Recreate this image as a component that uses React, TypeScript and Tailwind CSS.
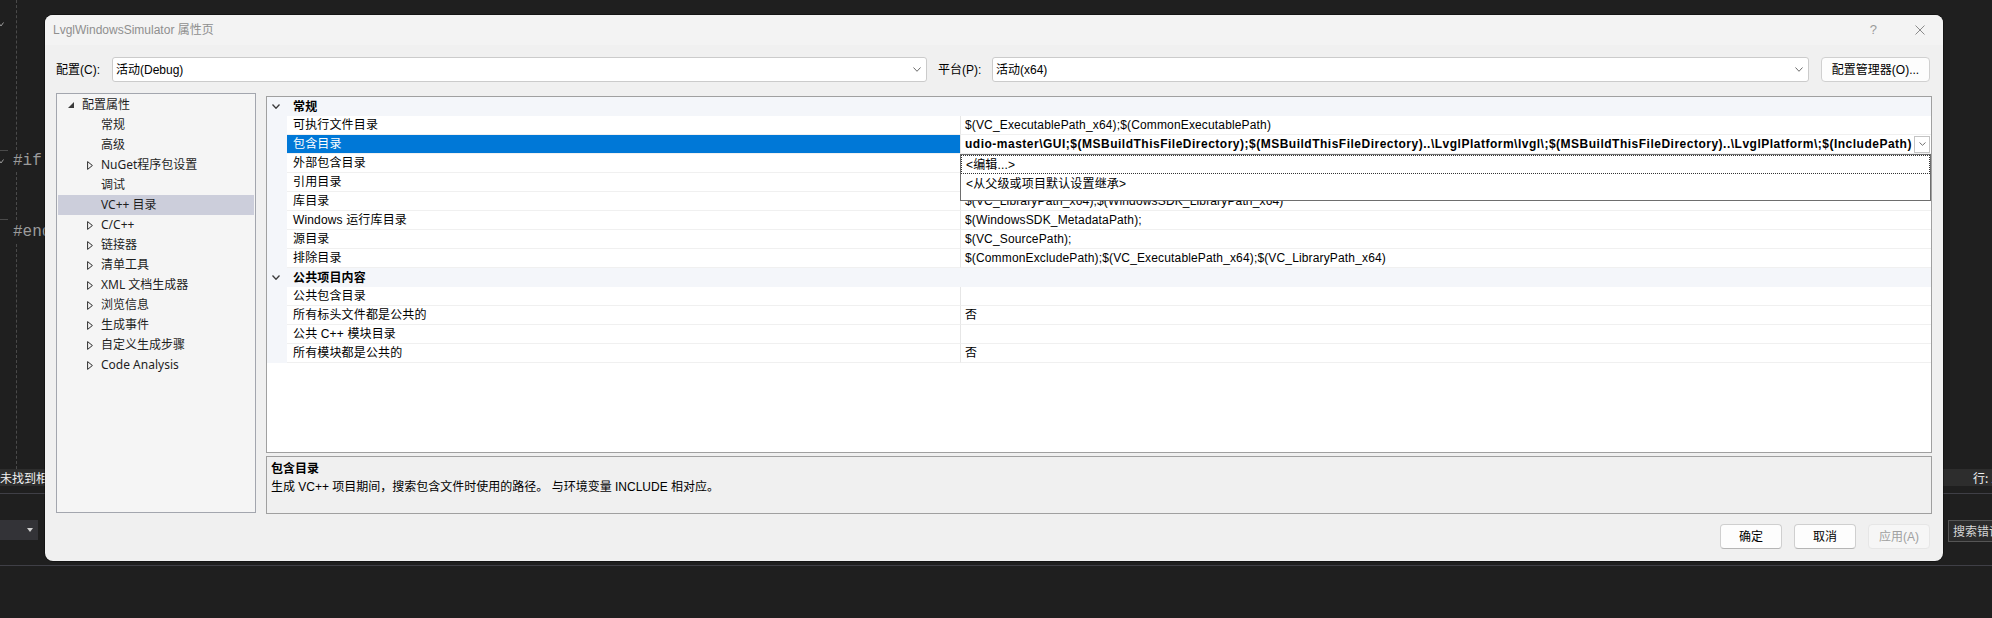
import React from 'react';

type Row =
  | { kind: 'cat'; label: string }
  | { kind: 'item'; name: string; value: string; selected?: boolean };

const rows: Row[] = [
  { kind: 'cat', label: '常规' },
  { kind: 'item', name: '可执行文件目录', value: '$(VC_ExecutablePath_x64);$(CommonExecutablePath)' },
  {
    kind: 'item',
    name: '包含目录',
    value:
      'udio-master\\GUI;$(MSBuildThisFileDirectory);$(MSBuildThisFileDirectory)..\\LvglPlatform\\lvgl\\;$(MSBuildThisFileDirectory)..\\LvglPlatform\\;$(IncludePath)',
    selected: true,
  },
  { kind: 'item', name: '外部包含目录', value: '' },
  { kind: 'item', name: '引用目录', value: '' },
  { kind: 'item', name: '库目录', value: '$(VC_LibraryPath_x64);$(WindowsSDK_LibraryPath_x64)' },
  { kind: 'item', name: 'Windows 运行库目录', value: '$(WindowsSDK_MetadataPath);' },
  { kind: 'item', name: '源目录', value: '$(VC_SourcePath);' },
  { kind: 'item', name: '排除目录', value: '$(CommonExcludePath);$(VC_ExecutablePath_x64);$(VC_LibraryPath_x64)' },
  { kind: 'cat', label: '公共项目内容' },
  { kind: 'item', name: '公共包含目录', value: '' },
  { kind: 'item', name: '所有标头文件都是公共的', value: '否' },
  { kind: 'item', name: '公共 C++ 模块目录', value: '' },
  { kind: 'item', name: '所有模块都是公共的', value: '否' },
];

type TreeItem = { label: string; root?: boolean; exp?: boolean; selected?: boolean };
const tree: TreeItem[] = [
  { label: '配置属性', root: true },
  { label: '常规' },
  { label: '高级' },
  { label: 'NuGet程序包设置', exp: true },
  { label: '调试' },
  { label: 'VC++ 目录', selected: true },
  { label: 'C/C++', exp: true },
  { label: '链接器', exp: true },
  { label: '清单工具', exp: true },
  { label: 'XML 文档生成器', exp: true },
  { label: '浏览信息', exp: true },
  { label: '生成事件', exp: true },
  { label: '自定义生成步骤', exp: true },
  { label: 'Code Analysis', exp: true },
];

function Chevron({ color = '#6b6b6b', sw = 1, w = 8, h = 5 }: { color?: string; sw?: number; w?: number; h?: number }) {
  return (
    <svg width={w} height={h} viewBox={`0 0 ${w} ${h}`} className="block">
      <polyline points={`0.5,0.5 ${w / 2},${h - 0.7} ${w - 0.5},0.5`} fill="none" stroke={color} strokeWidth={sw} />
    </svg>
  );
}

function Combo({ text, width }: { text: string; width: string }) {
  return (
    <div className={`${width} flex h-[25px] items-center justify-between rounded-[3px] border border-[#cbcbcb] bg-white pl-[3px] pr-[5px]`}>
      <span className="leading-[16px]">{text}</span>
      <Chevron />
    </div>
  );
}

function Grid() {
  return (
    <div className="h-[357px] mt-[3px] border border-[#a0a0a0] bg-white font-['Liberation_Sans','Noto_Sans_CJK_SC',sans-serif] text-[12px] tracking-[0.15px] text-black">
      {rows.map((r, i) => {
        if (r.kind === 'cat') {
          return (
            <div key={i} className="flex h-[19px] items-center bg-[#f4f6fa]">
              <div className="flex w-[20px] justify-start pl-[5px]">
                <Chevron color="#3c3c3c" sw={1.3} w={8} h={5} />
              </div>
              <span className="pl-[6px] font-bold leading-[16px]">{r.label}</span>
            </div>
          );
        }
        return (
          <div key={i} className="flex h-[19px]">
            <div className="w-[20px] shrink-0 bg-[#f4f6fa]" />
            <div
              className={
                r.selected
                  ? 'flex w-[674px] shrink-0 items-center border-b border-r border-b-[#f0f0f0] border-r-[#e6e6e6] bg-[#0078d7] pl-[6px] text-white'
                  : 'flex w-[674px] shrink-0 items-center border-b border-r border-b-[#f0f0f0] border-r-[#e6e6e6] pl-[6px]'
              }
            >
              <span className="leading-[16px]">{r.name}</span>
            </div>
            <div className="relative flex min-w-0 flex-1 items-center border-b border-[#f0f0f0] pl-[4px]">
              {r.selected ? (
                <>
                  <div className="min-w-0 flex-1 overflow-hidden whitespace-nowrap font-bold leading-[16px] tracking-[0.5px]">
                    {r.value}
                  </div>
                  <div className="mr-[1px] flex h-[17px] w-[16px] shrink-0 items-center justify-center border border-[#c4c4c4] bg-white">
                    <Chevron color="#707070" w={7} h={4} />
                  </div>
                  <div className="absolute left-[-1px] right-0 top-[19px] z-10 h-[47px] border border-[#6e6e6e] bg-white">
                    <div className="flex h-[19px] items-center border border-dotted border-[#333] pl-[4px]">
                      <span className="leading-[16px]">&lt;编辑...&gt;</span>
                    </div>
                    <div className="flex h-[19px] items-center pl-[5px]">
                      <span className="leading-[16px]">&lt;从父级或项目默认设置继承&gt;</span>
                    </div>
                  </div>
                </>
              ) : (
                <span className="whitespace-nowrap leading-[16px]">{r.value}</span>
              )}
            </div>
          </div>
        );
      })}
    </div>
  );
}

function Tree() {
  return (
    <div className="h-[420px] w-[200px] shrink-0 border border-[#a3a6ae] bg-[#f5f5f5] pt-[1px] font-['Noto_Sans','Noto_Sans_CJK_SC',sans-serif] text-[12px] text-[#1e1e1e]">
      {tree.map((t, i) => (
        <div
          key={i}
          className={
            t.selected
              ? 'mx-[1px] flex h-[20px] items-center bg-[#cccedb]'
              : 'mx-[1px] flex h-[20px] items-center'
          }
        >
          {t.root ? (
            <>
              <div className="w-[24px] shrink-0 pl-[10px]">
                <svg width="6" height="6" viewBox="0 0 6 6" className="block">
                  <polygon points="6,0 6,6 0,6" fill="#3a3a3a" />
                </svg>
              </div>
              <span className="leading-[16px]">{t.label}</span>
            </>
          ) : (
            <>
              <div className="w-[43px] shrink-0 pl-[29px]">
                {t.exp ? (
                  <svg width="6" height="9" viewBox="0 0 6 9" className="block">
                    <polygon points="0.6,0.6 5.4,4.5 0.6,8.4" fill="none" stroke="#2e2e2e" strokeWidth="1" />
                  </svg>
                ) : null}
              </div>
              <span className="leading-[16px]">{t.label}</span>
            </>
          )}
        </div>
      ))}
    </div>
  );
}

function Dialog() {
  return (
    <div className="absolute left-[45px] top-[15px] h-[546px] w-[1898px] overflow-hidden rounded-[8px] bg-[#f0f0f0] font-['Liberation_Sans','Noto_Sans_CJK_SC',sans-serif] text-[12px] text-black shadow-[0_0_0_1px_rgba(0,0,0,0.35)]">
      {/* title bar */}
      <div className="flex h-[30px] items-center bg-[#f3f3f3]">
        <span className="pl-[8px] leading-[16px] text-[#8f8f8f]">LvglWindowsSimulator 属性页</span>
        <div className="ml-auto flex items-center pr-[18px]">
          <span className="font-['Liberation_Sans',sans-serif] text-[13px] leading-[16px] text-[#9a9a9a]">?</span>
          <svg width="10" height="10" viewBox="0 0 10 10" className="ml-[38px] block">
            <path d="M0.5 0.5 L9.5 9.5 M9.5 0.5 L0.5 9.5" stroke="#8a8a8a" strokeWidth="1" fill="none" />
          </svg>
        </div>
      </div>

      {/* config row */}
      <div className="mt-[12px] flex h-[25px] items-center pl-[11px] pr-[13px]">
        <span className="w-[56px] shrink-0 leading-[16px]">配置(C):</span>
        <Combo text="活动(Debug)" width="w-[815px]" />
        <span className="ml-[11px] w-[54px] shrink-0 leading-[16px]">平台(P):</span>
        <Combo text="活动(x64)" width="w-[817px]" />
        <div className="ml-[12px] flex h-[25px] w-[109px] items-center justify-center rounded-[4px] border border-[#d0d0d0] bg-[#fdfdfd]">
          <span className="leading-[16px]">配置管理器(O)...</span>
        </div>
      </div>

      {/* main */}
      <div className="mt-[11px] flex h-[421px] items-start gap-[10px] px-[11px]">
        <Tree />
        <div className="flex w-[1666px] flex-col">
          <Grid />
          <div className="mt-[3px] h-[58px] border border-[#a0a0a0] bg-[#f0f0f0] pl-[4px] pt-[3px]">
            <div className="h-[18px] font-bold leading-[18px]">包含目录</div>
            <div className="h-[18px] leading-[18px]">生成 VC++ 项目期间，搜索包含文件时使用的路径。 与环境变量 INCLUDE 相对应。</div>
          </div>
        </div>
      </div>

      {/* footer */}
      <div className="mt-[10px] flex justify-end gap-[12px] pr-[13px]">
        <div className="flex h-[25px] w-[62px] items-center justify-center rounded-[4px] border border-[#cfcfcf] border-b-[#b5b5b5] bg-[#fdfdfd]">
          <span className="leading-[16px]">确定</span>
        </div>
        <div className="flex h-[25px] w-[62px] items-center justify-center rounded-[4px] border border-[#cfcfcf] border-b-[#b5b5b5] bg-[#fdfdfd]">
          <span className="leading-[16px]">取消</span>
        </div>
        <div className="flex h-[25px] w-[62px] items-center justify-center rounded-[4px] border border-[#e6e6e6] bg-[#f6f6f6]">
          <span className="leading-[16px] text-[#a0a0a0]">应用(A)</span>
        </div>
      </div>
    </div>
  );
}

export default function App() {
  return (
    <div className="relative h-[618px] w-[1992px] overflow-hidden bg-[#1f1f1f] font-['Noto_Sans_CJK_SC',sans-serif]">
      {/* editor area */}
      <div className="relative h-[469px]">
        <div className="pl-[13px] pt-[150px] font-['Liberation_Mono',monospace] text-[16px] leading-[23.5px] text-[#9b9b9b]">
          <div>#if</div>
          <div>&nbsp;</div>
          <div>&nbsp;</div>
          <div>#endif</div>
        </div>
        {/* indent guide segments */}
        <div className="absolute left-[16px] top-[0px] h-[150px] border-l border-dashed border-[#4a4a4a]" />
        <div className="absolute left-[16px] top-[172px] h-[48px] border-l border-dashed border-[#4a4a4a]" />
        <div className="absolute left-[16px] top-[244px] h-[225px] border-l border-dashed border-[#4a4a4a]" />
        {/* gutter fold markers */}
        <svg width="6" height="5" viewBox="0 0 6 5" className="absolute left-[-2px] top-[22px]">
          <polyline points="0.5,0.5 3,4 5.5,0.5" fill="none" stroke="#9a9a9a" strokeWidth="1" />
        </svg>
        <svg width="6" height="5" viewBox="0 0 6 5" className="absolute left-[-2px] top-[159px]">
          <polyline points="0.5,0.5 3,4 5.5,0.5" fill="none" stroke="#9a9a9a" strokeWidth="1" />
        </svg>
        <div className="absolute left-[0px] top-[150px] w-[8px] border-t border-[#4a4a4a]" />
        <div className="absolute left-[0px] top-[219px] w-[8px] border-t border-[#4a4a4a]" />
      </div>

      {/* status strip */}
      <div className="flex h-[17px] items-center overflow-hidden whitespace-nowrap bg-[#2d2d2d] text-[12px] text-[#f1f1f1]">
        <div className="w-[1973px] shrink-0 leading-[16px]">未找到相关问题</div>
        <div className="shrink-0 leading-[16px]">行: 1</div>
      </div>
      <div className="mt-[7px] border-t border-[#3f3f46]" />

      {/* lower panel row */}
      <div className="mt-[26px] flex h-[22px] items-start justify-between">
        <div className="flex h-[20px] w-[38px] items-center justify-end bg-[#333337] pr-[5px]">
          <svg width="6" height="4" viewBox="0 0 6 4" className="block">
            <polygon points="0,0 6,0 3,4" fill="#d0d0d0" />
          </svg>
        </div>
        <div className="flex h-[22px] w-[44px] items-center overflow-hidden whitespace-nowrap border border-r-0 border-[#555555] bg-[#2b2b2b] pl-[4px] text-[12px] text-[#d6d6d6]">
          <span className="leading-[16px]">搜索错误列表</span>
        </div>
      </div>
      <div className="mt-[23px] border-t border-[#3f3f46]" />

      <Dialog />
    </div>
  );
}
